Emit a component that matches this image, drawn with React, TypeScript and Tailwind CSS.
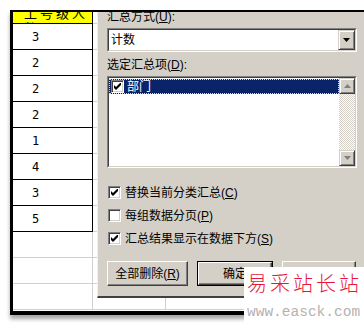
import type { ReactNode } from 'react'

const counts = [3, 2, 2, 2, 1, 4, 3, 5]

function Check({ checked }: { checked: boolean }) {
  return (
    <span className="flex h-[13px] w-[13px] shrink-0 items-center justify-center border border-t-[#808080] border-l-[#808080] border-r-white border-b-white bg-white shadow-[inset_1px_1px_0_#404040,inset_-1px_-1px_0_#d4d0c8]">
      {checked && (
        <svg width="7" height="7" viewBox="0 0 7 7">
          <path d="M0 2v3l2 2 5-5V-1L2 4z" fill="#000" />
        </svg>
      )}
    </span>
  )
}

function Button({ children, isDefault }: { children?: ReactNode; isDefault?: boolean }) {
  return (
    <div
      className={`flex h-[25px] items-center justify-center bg-[#d4d0c8] ${
        isDefault ? 'border border-black' : ''
      }`}
    >
      <div className="flex h-full w-full items-center justify-center border border-t-white border-l-white border-r-[#404040] border-b-[#404040] shadow-[inset_-1px_-1px_0_#808080]">
        <span>{children}</span>
      </div>
    </div>
  )
}

function Sunken({ className, children }: { className: string; children: ReactNode }) {
  return (
    <div
      className={`border border-t-[#808080] border-l-[#808080] border-r-white border-b-white ${className}`}
    >
      <div className="flex h-full w-full border border-t-[#404040] border-l-[#404040] border-r-[#d4d0c8] border-b-[#d4d0c8] bg-white">
        {children}
      </div>
    </div>
  )
}

function ScrollBtn({ up, dim }: { up?: boolean; dim?: boolean }) {
  return (
    <div className="flex h-[16px] w-[16px] items-center justify-center border border-t-[#d4d0c8] border-l-[#d4d0c8] border-r-[#404040] border-b-[#404040] bg-[#d4d0c8] shadow-[inset_1px_1px_0_#fff,inset_-1px_-1px_0_#808080]">
      <svg width="7" height="4" viewBox="0 0 7 4">
        <path d={up ? 'M3.5 0L7 4H0z' : 'M0 0h7L3.5 4z'} fill={dim ? '#808080' : '#000'} />
      </svg>
    </div>
  )
}

function Option({ checked, children }: { checked: boolean; children: ReactNode }) {
  return (
    <div className="flex h-[23px] items-center gap-[4px] pl-[1px]">
      <Check checked={checked} />
      <span>{children}</span>
    </div>
  )
}

export default function App() {
  return (
    <div className="relative h-[327px] w-[364px] overflow-hidden bg-white font-['Liberation_Sans','Noto_Sans_CJK_SC',sans-serif] text-[12px] leading-[14px] text-black">
      <div className="ml-[10px] mt-[10px] h-[305px] w-[360px] border-b-4 border-l-[3px] border-t-2 border-black shadow-[0_4px_4px_rgba(0,0,0,0.35)]">
        <div className="relative h-full w-full overflow-hidden">
          {/* sheet */}
          <div className="flex flex-col">
            <div className="flex h-[12px]">
              <div className="h-[12px] w-[80px] overflow-hidden border-b border-r border-black bg-[#ffff00] pl-[11px]">
                <div className="-mt-[6px] h-[17px] text-[13px] leading-[15px] tracking-[3px]">工号级人数</div>
              </div>
              <div className="w-[73px] border-b border-r border-[#d0d0d0]" />
              <div className="flex-1 border-b border-[#d0d0d0]" />
            </div>
            {counts.map((n, i) => (
              <div key={i} className="flex h-[26px]">
                <div className="flex w-[80px] items-center border-b border-r border-black pl-[19px] font-['DejaVu_Sans_Mono',monospace] text-[12px]">
                  {n}
                </div>
                <div className="w-[73px] border-b border-r border-[#d0d0d0]" />
                <div className="flex-1 border-b border-[#d0d0d0]" />
              </div>
            ))}
            {[0, 1, 2].map((i) => (
              <div key={i} className="flex h-[26px]">
                <div className="w-[80px] border-b border-r border-[#d0d0d0]" />
                <div className="w-[73px] border-b border-r border-[#d0d0d0]" />
                <div className="flex-1 border-b border-[#d0d0d0]" />
              </div>
            ))}
          </div>

          {/* subtotal dialog */}
          <div className="absolute left-[84px] top-0 h-[286px] w-[280px] border-b-2 border-l border-b-[#404040] border-l-[#f0f0f0] bg-[#d4d0c8] pl-[9px] pr-[10px]">
            <div className="-mt-[2px] h-[14px]">
              汇总方式(<u>U</u>):
            </div>
            <Sunken className="mt-[4px] h-[24px] w-[250px]">
              <div className="flex flex-1 items-center pl-[2px]">计数</div>
              <div className="flex h-full items-center">
                <div className="flex h-[20px] w-[17px] items-center justify-center border border-t-[#d4d0c8] border-l-[#d4d0c8] border-r-[#404040] border-b-[#404040] bg-[#d4d0c8] shadow-[inset_1px_1px_0_#fff,inset_-1px_-1px_0_#808080]">
                  <svg width="7" height="4" viewBox="0 0 7 4">
                    <path d="M0 0h7L3.5 4z" fill="#000" />
                  </svg>
                </div>
              </div>
            </Sunken>
            <div className="mt-[6px] h-[14px]">
              选定汇总项(<u>D</u>):
            </div>
            <Sunken className="mt-[4px] h-[92px] w-[250px]">
              <div className="flex-1 pt-[1px]">
                <div className="flex h-[15px] items-center gap-[3px] border border-dotted border-[#e8dc9a] bg-[#0a246a] pl-[1px] text-white">
                  <Check checked />
                  <span>部门</span>
                </div>
              </div>
              <div className="flex w-[16px] flex-col bg-[image:repeating-conic-gradient(#d4d0c8_0_25%,#ffffff_0_50%)] bg-[length:2px_2px]">
                <ScrollBtn up dim />
                <div className="flex-1" />
                <ScrollBtn dim />
              </div>
            </Sunken>
            <div className="mt-[13px] flex flex-col">
              <Option checked>
                替换当前分类汇总(<u>C</u>)
              </Option>
              <Option checked={false}>
                每组数据分页(<u>P</u>)
              </Option>
              <Option checked>
                汇总结果显示在数据下方(<u>S</u>)
              </Option>
            </div>
            <div className="mt-[11px] flex gap-[9px]">
              <div className="w-[81px]">
                <Button>
                  全部删除(<u>R</u>)
                </Button>
              </div>
              <div className="w-[76px]">
                <Button isDefault>确定</Button>
              </div>
              <div className="w-[74px]">
                <Button />
              </div>
            </div>
          </div>
        </div>
      </div>

      {/* watermark */}
      <div className="absolute left-[244px] top-[267px] flex h-[60px] w-[120px] flex-col bg-white pl-[3px]">
        <div className="mt-[3px] font-['Noto_Sans_CJK_SC',sans-serif] text-[20px] font-light leading-[26px] tracking-[3px] text-[#e8173a]">
          易采站长站
        </div>
        <div className="mt-[9px] font-['Liberation_Mono',monospace] text-[14.5px] leading-[14px] text-[#b8b0b0]">
          www.easck.com
        </div>
      </div>
    </div>
  )
}
